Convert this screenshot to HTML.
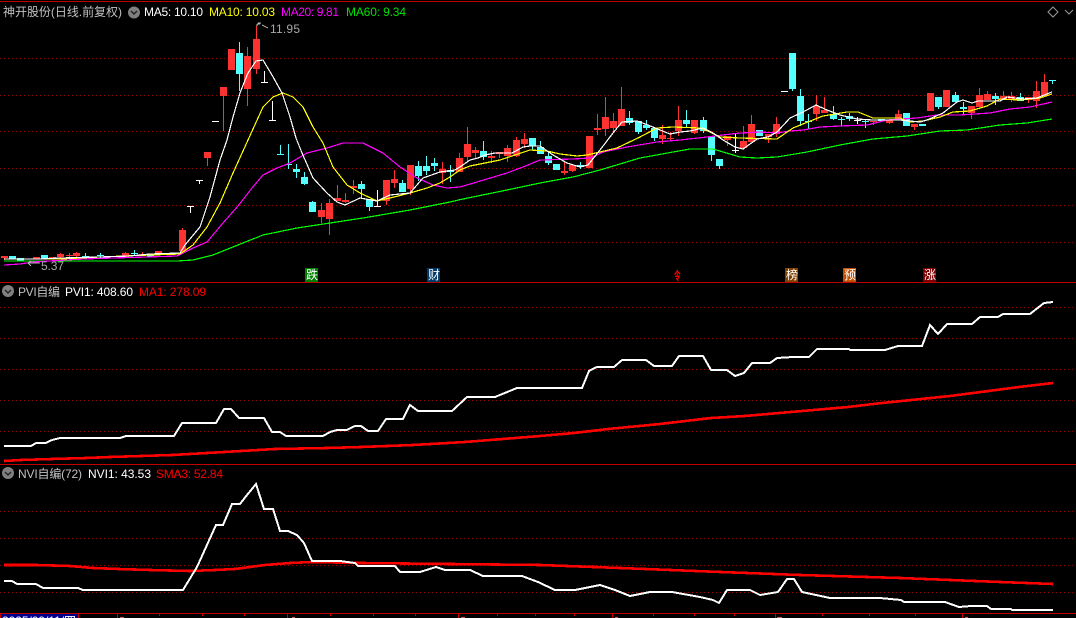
<!DOCTYPE html>
<html lang="zh">
<head>
<meta charset="utf-8">
<title>神开股份</title>
<style>
html,body{margin:0;padding:0;background:#000;width:1076px;height:618px;overflow:hidden}
svg{display:block;position:absolute;left:0;top:0}
text{font-family:"Liberation Sans","Noto Sans CJK SC",sans-serif;font-size:12px}
.l{fill:none;shape-rendering:crispEdges}
.g{stroke:#a00000;stroke-width:1;stroke-dasharray:1 3;shape-rendering:crispEdges;fill:none}
</style>
</head>
<body>
<svg width="1076" height="618" viewBox="0 0 1076 618" xmlns="http://www.w3.org/2000/svg">
<rect width="1076" height="618" fill="#000"/>

<!-- frame lines -->
<path d="M0 1.5H1076M0 282.5H1076M0 464.5H1076M0 613.5H1076" stroke="#c00000" stroke-width="1" class="l"/>

<!-- grid -->
<path class="g" d="M0 58.5H1076M0 95.5H1076M0 131.5H1076M0 168.5H1076M0 205.5H1076M0 242.5H1076M0 307.5H1076M0 338.5H1076M0 369.5H1076M0 400.5H1076M0 431.5H1076M0 511.5H1076M0 538.5H1076M0 565.5H1076M0 592.5H1076"/>

<!-- time axis -->
<path d="M117.5 613V618M159.5 613V616M202.5 613V616M244.5 613V616M287.5 613V618M330.5 613V616M373.5 613V616M415.5 613V616M458.5 613V618M497.5 613V616M535.5 613V616M574.5 613V616M612.5 613V618M653.5 613V616M694.5 613V616M734.5 613V616M775.5 613V618M822.5 613V616M869.5 613V616M915.5 613V616M962.5 613V618" stroke="#c00000" class="l"/>
<path d="M120 617h4v1h-4zM292 617h3v1h-3zM461 617h4v1h-4zM615 617h3v1h-3zM777 617h5v1h-5zM965 617h3v1h-3z" fill="#d06070"/>
<rect x="0.5" y="613.5" width="78" height="6" fill="#00008b" stroke="#c00000"/>
<text x="2" y="625" fill="#fff" textLength="74" lengthAdjust="spacing">2025/09/11/四</text>

<!-- wicks -->
<path class="l" stroke="#ff3232" d="M4.5 256V260M60.5 253V258M69.5 253V257M66 255.5H73M76.5 252V257M125.5 252V258M142.5 252V256M139 254.5H146M182.5 228V252M207.5 158V166M223.5 96V131M247.5 47V106M256.5 26V74M321.5 203V223M329.5 199V235M337.5 185V201M345.5 193V203M353.5 180V194M386.5 201V205M394.5 170V188M410.5 189V195M442.5 162V184M459.5 153V172M467.5 127V161M475.5 147V158M491.5 151V163M499.5 152V158M507.5 145V162M516.5 137V157M524.5 133V148M564.5 162V175M572.5 165V172M597.5 114V135M605.5 97V136M613.5 113V133M621.5 87V126M662.5 125V144M670.5 132V140M678.5 106V136M694.5 120V134M727.5 136V146M743.5 126V150M751.5 115V142M768.5 137V143M776.5 117V137M816.5 95V121M824.5 97V113M873.5 121V125M889.5 120V124M898.5 110V119M914.5 127V130M971.5 113V119M979.5 88V107M987.5 91V100M1003.5 91V100M1011.5 92V102M1028.5 100V103M1036.5 81V108M1044.5 74V96"/>
<path class="l" stroke="#54ffff" d="M239.5 42V91M296.5 164V178M304.5 172V185M312.5 201V212M361.5 181V199M369.5 207V211M402.5 180V192M418.5 161V181M426.5 156V175M434.5 158V171M450.5 165V182M483.5 141V160M532.5 146V150M540.5 141V147M548.5 151V165M580.5 162V169M629.5 111V125M638.5 132V134M646.5 120V130M654.5 138V141M686.5 110V128M703.5 117V133M711.5 155V161M719.5 166V169M792.5 89V91M800.5 89V126M833.5 106V120M849.5 113V121M938.5 107V109M955.5 92V95M963.5 102V114M995.5 93V105M1020.5 93V101M808.5 114V129M805 121.5H812M841.5 117V126M838 119.5H845M865.5 119V128M862 121.5H869M280.5 145V154M277 154.5H284M288.5 144V169M285 164.5H292M1052.5 80V84M1049 80.5H1056M85.5 253V259M82 256.5H89M134.5 250V256M131 253.5H138M100.5 253V258M97 255.5H104"/>
<path class="l" stroke="#fff" d="M212 121.5H219M264.5 71V82M261 82.5H268M272.5 101V120M269 120.5H276M196 180.5H203M199.5 180V184M187 206.5H194M190.5 206V213M377.5 190V206M374 206.5H381M735.5 133V153M732 150.5H739M781 91.5H788M854 120.5H861M857.5 117V124"/>

<!-- bodies -->
<path shape-rendering="crispEdges" fill="#ff3232" d="M1 256h7v2h-7zM33 257h7v2h-7zM49 257h7v2h-7zM57 254h7v3h-7zM73 253h7v3h-7zM122 253h7v4h-7zM155 251h7v3h-7zM163 253h7v2h-7zM179 230h7v21h-7zM204 152h7v6h-7zM220 87h7v9h-7zM228 49h7v21h-7zM244 56h7v33h-7zM253 39h7v30h-7zM318 210h7v7h-7zM326 203h7v16h-7zM334 198h7v3h-7zM342 200h7v2h-7zM350 186h7v2h-7zM383 180h7v21h-7zM391 179h7v4h-7zM407 165h7v24h-7zM439 169h7v4h-7zM456 158h7v14h-7zM464 144h7v13h-7zM472 150h7v3h-7zM488 156h7v2h-7zM496 152h7v2h-7zM504 148h7v8h-7zM513 140h7v16h-7zM521 139h7v5h-7zM561 171h7v2h-7zM569 165h7v6h-7zM586 136h7v32h-7zM594 128h7v2h-7zM602 117h7v12h-7zM610 121h7v7h-7zM618 109h7v17h-7zM659 135h7v4h-7zM667 138h7v1h-7zM675 120h7v11h-7zM691 120h7v13h-7zM724 136h7v4h-7zM740 141h7v7h-7zM748 124h7v18h-7zM765 134h7v3h-7zM773 124h7v10h-7zM813 106h7v8h-7zM821 110h7v3h-7zM870 121h7v1h-7zM886 120h7v3h-7zM895 114h7v5h-7zM911 124h7v3h-7zM927 93h7v18h-7zM943 90h7v17h-7zM968 106h7v7h-7zM976 95h7v12h-7zM984 94h7v6h-7zM1000 96h7v4h-7zM1008 96h7v3h-7zM1025 97h7v3h-7zM1033 91h7v10h-7zM1041 82h7v14h-7z"/>
<path shape-rendering="crispEdges" fill="#54ffff" d="M9 256h7v3h-7zM17 258h7v3h-7zM41 255h7v4h-7zM147 254h7v3h-7zM236 53h7v21h-7zM293 169h7v3h-7zM301 177h7v7h-7zM309 202h7v10h-7zM358 184h7v5h-7zM366 199h7v8h-7zM399 183h7v9h-7zM415 166h7v10h-7zM423 166h7v5h-7zM431 163h7v3h-7zM447 170h7v2h-7zM480 151h7v6h-7zM529 138h7v8h-7zM537 147h7v7h-7zM545 156h7v7h-7zM553 164h7v6h-7zM577 165h7v2h-7zM626 118h7v5h-7zM635 121h7v11h-7zM643 125h7v3h-7zM651 128h7v10h-7zM683 120h7v4h-7zM700 120h7v11h-7zM708 136h7v19h-7zM716 159h7v7h-7zM756 130h7v6h-7zM789 53h7v36h-7zM797 96h7v25h-7zM830 114h7v5h-7zM846 116h7v3h-7zM878 119h7v2h-7zM903 113h7v13h-7zM919 124h7v2h-7zM935 97h7v10h-7zM952 95h7v7h-7zM960 107h7v2h-7zM992 96h7v3h-7zM1017 97h7v4h-7z"/>

<!-- moving averages -->
<polyline class="l" stroke="#00ff00" stroke-width="1.2" points="4,261 150,261 177,261 193,260 213,255 243,243 263,235 297,228 330,223 363,218 410,210 450,202 463,199 507,190 540,183 573,177 600,170 640,158 673,152 690,149 713,149 740,157 757,158 777,157 807,152 840,145 873,139 907,136 940,131 967,130 1000,125 1027,123 1052,119"/>
<polyline class="l" stroke="#ff00ff" stroke-width="1.2" points="4,265 20,264 33,262 83,259 113,258 147,257 177,256 193,248 207,242 223,223 238,206 252,188 263,175 277,168 290,163 307,153 327,148 343,143 363,143 383,153 400,167 417,178 433,185 447,188 460,187 477,182 507,173 523,167 540,160 573,159 590,158 603,152 627,147 657,142 680,140 707,137 723,135 740,133 760,132 777,133 790,131 803,130 820,127 840,126 867,125 887,120 917,118 937,115 960,115 990,113 1010,109 1030,107 1052,102"/>
<polyline class="l" stroke="#ffff00" stroke-width="1.2" points="4,259 60,259 100,257 150,255 180,254 193,245 207,227 220,203 233,173 248,140 263,107 273,97 283,93 293,97 303,107 313,127 323,143 333,167 347,185 360,193 377,201 390,198 410,193 427,188 440,183 450,177 460,170 470,166 490,162 500,160 512,156 530,150 547,151 560,154 577,156 587,155 600,152 617,148 640,137 657,128 673,127 700,128 710,132 720,137 740,138 777,139 793,128 803,124 823,116 847,112 858,112 873,118 900,118 910,122 923,121 940,117 953,112 970,111 987,106 1000,99 1020,100 1040,98 1052,94"/>
<polyline class="l" stroke="#ffffff" stroke-width="1.2" points="4,259 40,259 60,258 100,257 130,256 150,254 180,253 185,245 200,227 210,197 220,160 227,140 233,117 240,93 248,73 256,61 263,60 272,75 282,93 290,117 296,138 302,153 313,178 327,193 337,202 345,205 360,198 377,201 390,195 410,193 423,178 440,172 455,170 460,167 470,160 478,158 485,155 495,153 512,153 523,147 530,146 540,146 553,155 567,163 580,167 588,165 600,150 613,133 622,122 637,121 648,125 660,130 670,134 680,132 690,131 703,128 713,133 723,140 735,147 743,149 757,139 768,137 777,132 790,118 803,112 816,105 827,110 840,115 857,119 873,120 900,120 920,122 927,120 943,113 957,102 963,100 972,103 978,101 1000,101 1007,97 1023,99 1037,98 1052,92"/>

<!-- PVI -->
<polyline class="l" stroke="#fff" stroke-width="2" points="4,446 31,446 36,443 46,443 52,440 60,438 93,438 102,438 120,438 126,436 174,436 182,423 216,423 224,409 231,409 239,418 264,418 272,432 280,432 286,436 323,436 330,432 337,430 347,430 355,426 361,426 368,431 378,431 386,419 403,419 410,405 418,411 452,411 467,397 495,397 517,388 582,388 589,371 597,367 614,367 622,360 646,360 654,366 672,366 679,356 703,356 711,370 727,370 735,376 744,373 752,363 770,363 777,358 793,357 809,357 817,349 849,349 850,350 885,350 898,346 922,346 930,325 938,334 947,324 972,324 980,317 998,317 1003,314 1030,314 1044,303 1053,302"/>
<polyline class="l" stroke="#ff0000" stroke-width="2.6" points="4,461 21,460 52,459 86,458 110,457 141,456 172,455 207,453 241,451 275,449 327,448 361,447 413,445 465,442 540,436 574,433 608,429 660,424 711,418 745,416 779,413 848,407 882,403 950,396 1019,387 1053,383"/>

<!-- NVI -->
<polyline class="l" stroke="#ff0000" stroke-width="2.6" points="4,565 36,565 70,566 93,568 118,569 150,570 190,571 215,570 235,569 265,565 290,563 312,562 360,563 450,564 540,565 620,568 720,572 800,575 900,578 1000,582 1053,584"/>
<polyline class="l" stroke="#fff" stroke-width="2" points="4,581 12,581 17,584 36,584 43,588 78,588 83,590 183,590 197,567 216,525 223,525 232,504 240,504 247,495 256,484 264,509 273,509 280,531 288,531 297,535 304,543 312,561 340,561 355,563 358,566 395,566 400,572 420,572 436,567 445,570 470,570 483,576 522,576 538,582 555,590 575,590 600,585 615,590 630,596 650,592 672,592 700,597 713,600 719,603 727,590 750,590 760,595 778,592 787,579 794,579 802,592 830,598 880,598 901,600 904,602 945,602 959,607 971,606 987,606 991,609 1011,609 1012,610 1053,610"/>

<!-- header row -->
<text x="3" y="16" fill="#c0c0c0" textLength="119" lengthAdjust="spacing">神开股份(日线.前复权)</text>
<circle cx="134" cy="12.5" r="6" fill="#808080"/>
<path d="M131 11l3 3 3-3" fill="none" stroke="#222" stroke-width="1.4"/>
<text x="144" y="16" fill="#fff" textLength="59" lengthAdjust="spacing">MA5: 10.10</text>
<text x="209" y="16" fill="#ffff00" textLength="66" lengthAdjust="spacing">MA10: 10.03</text>
<text x="281" y="16" fill="#ff00ff" textLength="58" lengthAdjust="spacing">MA20: 9.81</text>
<text x="346" y="16" fill="#00e000" textLength="60" lengthAdjust="spacing">MA60: 9.34</text>
<path d="M1053 7l5 5-5 5-5-5z" fill="none" stroke="#9a9a9a"/>
<path d="M1065 10l4 4 4-4" fill="none" stroke="#9a9a9a"/>

<!-- high/low labels -->
<path d="M257 24h3M257 24v2M258 23h3M262 25l6 3" stroke="#c0c0c0" fill="none" class="l"/>
<text x="270" y="33" fill="#a8a8a8" textLength="30" lengthAdjust="spacing">11.95</text>
<path d="M28 263h12M28 263l3-2M28 263l3 3" stroke="#b0b0b0" fill="none" class="l"/>
<text x="41" y="270" fill="#a8a8a8" textLength="23" lengthAdjust="spacing">5.37</text>

<!-- event markers -->
<rect x="305" y="268" width="13" height="14" fill="#008000"/>
<text x="306" y="279" fill="#fff">跌</text>
<rect x="427" y="268" width="13" height="14" fill="#003a6b"/>
<text x="428" y="279" fill="#fff">财</text>
<text transform="translate(674 280) scale(0.55 1)" fill="#ff0000" font-weight="bold">令</text>
<rect x="785" y="268" width="13" height="14" fill="#804000"/>
<text x="786" y="279" fill="#fff">榜</text>
<rect x="843" y="268" width="13" height="14" fill="#c05000"/>
<text x="844" y="279" fill="#fff">预</text>
<rect x="923" y="268" width="13" height="14" fill="#800000"/>
<text x="924" y="279" fill="#fff">涨</text>

<!-- PVI header -->
<circle cx="8" cy="291" r="6" fill="#808080"/>
<path d="M5 290l3 3 3-3" fill="none" stroke="#222" stroke-width="1.4"/>
<text x="18" y="296" fill="#c0c0c0" textLength="42" lengthAdjust="spacing">PVI自编</text>
<text x="65" y="296" fill="#fff" textLength="68" lengthAdjust="spacing">PVI1: 408.60</text>
<text x="139" y="296" fill="#ff0000" textLength="67" lengthAdjust="spacing">MA1: 278.09</text>

<!-- NVI header -->
<circle cx="8" cy="473" r="6" fill="#808080"/>
<path d="M5 472l3 3 3-3" fill="none" stroke="#222" stroke-width="1.4"/>
<text x="18" y="478" fill="#c0c0c0" textLength="64" lengthAdjust="spacing">NVI自编(72)</text>
<text x="88" y="478" fill="#fff" textLength="63" lengthAdjust="spacing">NVI1: 43.53</text>
<text x="156" y="478" fill="#ff0000" textLength="67" lengthAdjust="spacing">SMA3: 52.84</text>
</svg>
</body>
</html>
